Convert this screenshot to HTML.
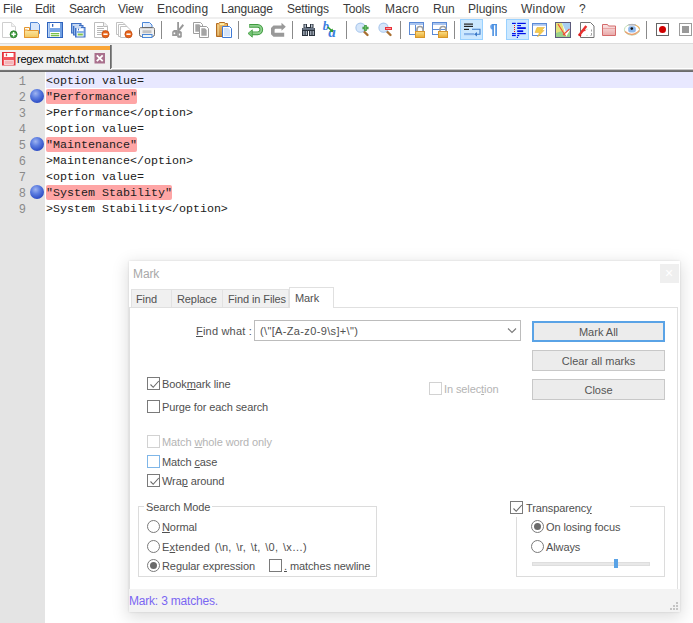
<!DOCTYPE html>
<html><head><meta charset="utf-8">
<style>
*{margin:0;padding:0;box-sizing:border-box}
html,body{width:693px;height:623px;overflow:hidden;background:#fff;position:relative;font-family:"Liberation Sans",sans-serif}
.a{position:absolute}
.t{position:absolute;white-space:nowrap;line-height:1}
#menu{left:0;top:0;width:693px;height:19px;background:#fff;border-bottom:2px solid #efefef}
.mi{position:absolute;top:3px;font-size:12px;color:#3a3a3a;white-space:nowrap;line-height:12px;letter-spacing:-0.2px}
#tool{left:0;top:19px;width:693px;height:25px;background:#fff;border-bottom:1px solid #dcdcdc}
.sep{position:absolute;top:21px;width:1px;height:18px;background:#8a8a8a}
#tabbar{left:0;top:44px;width:693px;height:26px;background:#f0f0f0}
#editor{left:0;top:72px;width:693px;height:551px;background:#fff}
#margin{left:0;top:72px;width:45px;height:551px;background:#e4e4e4}
.ln{position:absolute;left:0;width:26px;text-align:right;font-family:"Liberation Mono",monospace;font-size:12px;color:#8a8a8a;line-height:16px;height:16px;padding-top:2px}
.code{position:absolute;left:46px;font-family:"Liberation Mono",monospace;font-size:11.67px;color:#202020;line-height:16px;height:16px;white-space:pre;padding-top:1px}
.mk{position:absolute;left:46px;height:15px;background:#fea5a5;border-radius:2px}
.bm{position:absolute;left:30px;width:14px;height:14px;border-radius:50%;background:radial-gradient(circle at 40% 32%,#9fb4f0 0%,#5c7de0 35%,#2c4cc4 75%,#1c34a0 100%)}
/* dialog */
#dlg{left:129px;top:261px;width:551px;height:351px;background:#fff;box-shadow:0 4px 15px 2px rgba(0,0,0,0.13),0 0 2px rgba(0,0,0,0.12)}
.dt{position:absolute;z-index:2;white-space:nowrap;font-size:11px;line-height:12px;color:#505050;letter-spacing:-0.1px}
.cb{position:absolute;width:13px;height:13px;border:1px solid #7a7a7a;background:#fff}
.cb.dis{border-color:#d2d2d2}
.cb.hov{border-color:#7fb6e8}
.rb{position:absolute;width:13px;height:13px;border:1px solid #7a7a7a;border-radius:50%;background:#fff}
.btn{position:absolute;left:403px;width:133px;height:21px;background:#ececec;border:1px solid #c8c8c8}
.btn span{position:absolute;left:0;right:0;top:4px;text-align:center;font-size:11px;line-height:12px;color:#555;letter-spacing:0px}
</style></head><body>

<!-- menu bar -->
<div id="menu" class="a">
<span class="mi" style="left:3px;letter-spacing:0px">File</span>
<span class="mi" style="left:35px">Edit</span>
<span class="mi" style="left:69px;letter-spacing:-0.3px">Search</span>
<span class="mi" style="left:118px">View</span>
<span class="mi" style="left:157px;letter-spacing:0.15px">Encoding</span>
<span class="mi" style="left:221px">Language</span>
<span class="mi" style="left:287px">Settings</span>
<span class="mi" style="left:343px">Tools</span>
<span class="mi" style="left:385px;letter-spacing:0.15px">Macro</span>
<span class="mi" style="left:433px">Run</span>
<span class="mi" style="left:468px;letter-spacing:0px">Plugins</span>
<span class="mi" style="left:521px;letter-spacing:0.25px">Window</span>
<span class="mi" style="left:579px">?</span>
</div>

<!-- toolbar -->
<div id="tool" class="a"></div>



<!-- tab bar -->
<div id="tabbar" class="a"></div>
<div class="a" style="left:0;top:46px;width:110px;height:4px;background:#faa638"></div>
<div class="a" style="left:110px;top:45px;width:1px;height:24px;background:#6a6a6a"></div><div class="a" style="left:111px;top:45px;width:1px;height:23px;background:#8c8c8c"></div>
<div class="a" style="left:112px;top:68px;width:581px;height:1px;background:#fff"></div><div class="a" style="left:112px;top:69px;width:581px;height:1px;background:#c4c4c4"></div><div class="a" style="left:0px;top:69px;width:112px;height:1px;background:#e4e4e4"></div>
<div class="a" style="left:0;top:70px;width:693px;height:1px;background:#767676"></div><div class="a" style="left:0;top:71px;width:693px;height:1px;background:#6c6c6c"></div>
<span class="t" style="left:17px;top:54px;font-size:11px;color:#000;letter-spacing:-0.25px">regex match.txt</span>

<svg class="a" style="left:0;top:0" width="693" height="70" viewBox="0 0 693 70">
<defs>
<linearGradient id="gFold" x1="0" y1="0" x2="0" y2="1"><stop offset="0" stop-color="#fbe7a6"/><stop offset="1" stop-color="#f3c85e"/></linearGradient>
<linearGradient id="gClip" x1="0" y1="0" x2="0" y2="1"><stop offset="0" stop-color="#f0c070"/><stop offset="1" stop-color="#c88a3a"/></linearGradient>
<linearGradient id="gLock" x1="0" y1="0" x2="0" y2="1"><stop offset="0" stop-color="#fbe08a"/><stop offset="1" stop-color="#e8aa30"/></linearGradient>
<linearGradient id="gPrn" x1="0" y1="0" x2="0" y2="1"><stop offset="0" stop-color="#f4f4f4"/><stop offset="1" stop-color="#9a9a9a"/></linearGradient>
<linearGradient id="gPink" x1="0" y1="0" x2="0" y2="1"><stop offset="0" stop-color="#fbe6e6"/><stop offset="1" stop-color="#e8a8a8"/></linearGradient>
</defs>
<!-- separators -->
<g fill="#8a8a8a">
<rect x="161" y="21" width="1" height="18"/><rect x="238" y="21" width="1" height="18"/><rect x="292" y="21" width="1" height="18"/>
<rect x="346" y="21" width="1" height="18"/><rect x="400" y="21" width="1" height="18"/><rect x="454" y="21" width="1" height="18"/>
<rect x="646" y="21" width="1" height="18"/>
</g>
<!-- 1 new -->
<path d="M2.5 22.5 H11.5 L15.5 26.5 V37.5 H2.5 Z" fill="#fff" stroke="#cfcfcf"/>
<path d="M11.5 22.5 V26.5 H15.5" fill="#f2f2f2" stroke="#dcdcdc"/>
<circle cx="13.6" cy="34.3" r="3.5" fill="#3f9c3f" stroke="#2b7d2b" stroke-width="0.8"/>
<path d="M13.6 32.1 V36.5 M11.4 34.3 H15.8" stroke="#fff" stroke-width="1.5"/>
<!-- 2 open -->
<path d="M24.5 27.5 H29.5 V37.5 H24.5 Z" fill="#fffaf0" stroke="#e4962e"/>
<path d="M30.5 22.5 H37.5 L39.5 24.5 V33.5 H30.5 Z" fill="#d8e7fb" stroke="#4f86d6"/>
<path d="M24.5 30 H27 L28 30.5 H38.5 V37.5 H24.5 Z" fill="url(#gFold)" stroke="#e4962e"/>
<!-- 3 save -->
<rect x="47.5" y="22.5" width="15" height="15" fill="#6f9fe2" stroke="#2f63bd"/>
<rect x="48" y="23" width="1.5" height="14" fill="#b8d2f4"/>
<rect x="50" y="23" width="10" height="5" fill="#fff"/>
<rect x="52" y="24" width="1.3" height="2.8" fill="#2f63bd"/>
<rect x="50" y="28" width="10" height="4" fill="#7aa6e6"/>
<rect x="50" y="32" width="10" height="5" fill="#fff"/>
<rect x="50.8" y="33" width="8.4" height="1.3" fill="#78c048"/>
<rect x="50.8" y="35" width="8.4" height="1.3" fill="#78c048"/>
<!-- 4 save all -->
<g stroke="#3f6fc2" fill="#8fb4ea">
<rect x="71.5" y="23.5" width="9.5" height="9.5"/>
<rect x="73.5" y="25.5" width="9.5" height="9.5"/>
<rect x="75.5" y="27.5" width="9.5" height="9.5"/>
</g>
<rect x="73" y="24.5" width="6" height="1.2" fill="#fff"/>
<rect x="75" y="26.5" width="6" height="1.2" fill="#fff"/>
<rect x="77" y="28.3" width="6.5" height="2.7" fill="#fff"/>
<rect x="78" y="28.6" width="1" height="1.8" fill="#3f6fc2"/>
<rect x="77" y="33" width="6.5" height="3.4" fill="#f4fbe8"/>
<rect x="77.8" y="33.6" width="5" height="1.8" fill="#7cc048"/>
<!-- 5 close -->
<path d="M94.5 22.5 H104 L107.5 26 V37.5 H94.5 Z" fill="#fff" stroke="#bdbdbd"/>
<path d="M103.5 22.5 V26.5 H107.5" fill="#eee" stroke="#bdbdbd"/>
<path d="M97 26.5 H103 M97 28.5 H104 M97 30.5 H104 M97 32.5 H102 M97 34.5 H101" stroke="#9a9a9a" stroke-width="0.7"/>
<circle cx="105.5" cy="34.2" r="3.6" fill="#e8641a" stroke="#c04a10" stroke-width="0.8"/>
<path d="M103.4 34.2 H107.6" stroke="#fff" stroke-width="1.5"/>
<!-- 6 close all -->
<g fill="#fff" stroke="#c2c2c2">
<path d="M116.5 22.5 H123 L125.5 25 V34.5 H116.5 Z"/>
<path d="M118.5 24.5 H125 L127.5 27 V36.5 H118.5 Z"/>
<path d="M120.5 26.5 H127 L130.5 30 V37.5 H120.5 Z"/>
</g>
<circle cx="128.5" cy="34.2" r="3.6" fill="#e8641a" stroke="#c04a10" stroke-width="0.8"/>
<path d="M126.4 34.2 H130.6" stroke="#fff" stroke-width="1.5"/>
<!-- 7 print -->
<path d="M142.5 22.5 H149.5 L152 25 V29 H142.5 Z" fill="#dde9fb" stroke="#4a86d8"/>
<rect x="143.2" y="23.2" width="1.2" height="5.5" fill="#fff"/>
<rect x="139.5" y="27.5" width="15" height="9" rx="2" fill="#f2f2f2" stroke="#6a6a6a"/>
<rect x="140" y="28" width="14" height="1.3" fill="#d6d6d6"/>
<rect x="142.5" y="30.2" width="9" height="3" fill="#c2c2c2"/>
<rect x="142.5" y="34.5" width="9.5" height="3" fill="#eef6f6" stroke="#4a86d8"/>
<!-- 8 cut -->
<g fill="#989898" fill-rule="evenodd">
<rect x="177.2" y="22" width="1.8" height="10"/>
<path d="M182.6 24 L184 25.6 L179.6 31 L178.2 29.6 Z"/>
<path d="M174 30 H177 L177.5 31.5 V36 H172.2 V31.8 Z M173.6 32.6 H175.2 V34.2 H173.6 Z"/>
<path d="M177.2 31.5 L180 30.8 L181.8 32 V37 L180.8 37.8 H178 L177.2 37 Z M178.8 33.6 V35.6 H180.2 V33.6 Z"/>
</g>
<!-- 9 copy -->
<path d="M193.5 22.5 H200.5 L202.5 24.5 V33.5 H193.5 Z" fill="#fff" stroke="#9e9e9e"/>
<path d="M195.3 24.3 H199.2 L200.5 25.6 V31.7 H195.3 Z" fill="#a4a4a4"/>
<path d="M199.5 26.5 H206.5 L208.5 28.5 V37.5 H199.5 Z" fill="#fff" stroke="#9e9e9e"/>
<path d="M201.3 28.3 H205 L206.7 30 V35.8 H201.3 Z" fill="#a4a4a4"/>
<!-- 10 paste -->
<path d="M219.5 22.5 H224.5 L225.5 23.5 H227.5 V36.5 H216.5 V23.5 H218.5 Z" fill="url(#gClip)" stroke="#b46c22"/>
<rect x="217.6" y="25" width="1" height="10.5" fill="#f6dc9c"/>
<rect x="220" y="23.2" width="4" height="1.8" fill="#fff0a8"/>
<path d="M222.5 26.5 H229.5 L231.5 28.5 V37.5 H222.5 Z" fill="#fff" stroke="#3f7ad6"/>
<path d="M223.8 28 H228 L230 30 V36.2 H223.8 Z" fill="#d4e4fb"/>
<!-- 11 undo -->
<path d="M249.2 25.9 H257.6 A3.7 3.7 0 0 1 257.6 33.3 H252" fill="none" stroke="#3f9a3f" stroke-width="3.7"/>
<path d="M249.6 25.9 H257.6 A3.7 3.7 0 0 1 257.6 33.3 H252" fill="none" stroke="#8ed08e" stroke-width="1.9"/>
<path d="M248 33.4 L252.3 29.8 V37.2 Z" fill="#74c474" stroke="#3f9a3f" stroke-width="0.8" stroke-linejoin="round"/>
<!-- 12 redo -->
<path d="M273.5 25.5 H281.5 V22.8 L285.8 26.8 L281.5 30.8 V28.7 H275.4 L274.6 29.5 V32.7 H284.2 V36.8 H273.5 L271 34.3 V28 Z" fill="#999"/>
<!-- 13 find binoculars -->
<g fill="#2a323c">
<rect x="303.5" y="24" width="3.5" height="5"/><rect x="310" y="24" width="3.5" height="5"/>
<rect x="302" y="28" width="6" height="8"/><rect x="309" y="28" width="6" height="8"/>
<rect x="307" y="27" width="3" height="4"/>
</g>
<g fill="#b8c2d0">
<rect x="304.5" y="24.5" width="1.5" height="3"/><rect x="311" y="24.5" width="1.5" height="3"/>
<rect x="302.5" y="28.3" width="12" height="1.3" fill="#8a98ac"/>
<rect x="303.3" y="31" width="1.2" height="4"/><rect x="305.7" y="31" width="1.2" height="4"/>
<rect x="310.2" y="31" width="1.2" height="4"/><rect x="312.6" y="31" width="1.2" height="4"/>
</g>
<!-- 14 replace -->
<text x="322.8" y="30.3" font-family="Liberation Serif" font-style="italic" font-weight="bold" font-size="12.5" fill="#3b7de0">b</text>
<text x="328.2" y="37.2" font-family="Liberation Serif" font-style="italic" font-weight="bold" font-size="15" fill="#3b7de0">a</text>
<path d="M327.8 27 L331.5 30.5" stroke="#2e9a2e" stroke-width="1.6"/>
<path d="M333.3 32.3 L329.2 31.6 L332.6 28.4 Z" fill="#2e9a2e"/>
<!-- 15 zoom in -->
<path d="M363.5 31 L367.5 35" stroke="#a86e30" stroke-width="2.4" stroke-linecap="round"/>
<circle cx="360.5" cy="27.7" r="4.6" fill="#d5e6fa" stroke="#a9c7ec" stroke-width="1.1"/>
<path d="M365.5 25 V31 M362.5 28 H368.5" stroke="#2f8f2f" stroke-width="2.4"/>
<path d="M365.5 25.5 V30.5 M363 28 H368" stroke="#6cc06c" stroke-width="0.9"/>
<!-- 16 zoom out -->
<path d="M386.5 31 L390.5 35" stroke="#a86e30" stroke-width="2.4" stroke-linecap="round"/>
<circle cx="383.5" cy="27.7" r="4.6" fill="#d5e6fa" stroke="#a9c7ec" stroke-width="1.1"/>
<rect x="385" y="27" width="7" height="3" fill="#e8303a"/>
<rect x="386" y="28" width="5" height="1" fill="#ff9a9a"/>
<!-- 17 sync v -->
<rect x="409.5" y="22.5" width="14" height="12" fill="#fff" stroke="#5b8ad6"/>
<rect x="410" y="23" width="13" height="2" fill="#a9c4ef"/>
<path d="M415.5 25 V34" stroke="#5b8ad6"/>
<path d="M417 32 V29.5 A3 3 0 0 1 423 29.5 V32" fill="none" stroke="#a0a0a0" stroke-width="1.7"/>
<rect x="415.5" y="31.5" width="9" height="6" fill="url(#gLock)" stroke="#d8962a"/>
<!-- 18 sync h -->
<rect x="432.5" y="22.5" width="14" height="12" fill="#fff" stroke="#5b8ad6"/>
<rect x="433" y="23" width="13" height="2" fill="#a9c4ef"/>
<path d="M433 29.5 H446" stroke="#5b8ad6"/>
<path d="M440 32 V29.5 A3 3 0 0 1 446 29.5 V32" fill="none" stroke="#a0a0a0" stroke-width="1.7"/>
<rect x="438.5" y="31.5" width="9" height="6" fill="url(#gLock)" stroke="#d8962a"/>
<!-- 19 word wrap (checked) -->
<rect x="460.5" y="19.5" width="22" height="20" fill="#cce8ff" stroke="#99d1ff"/>
<rect x="464" y="23.5" width="9" height="1.2" fill="#222"/>
<rect x="464" y="25.8" width="9" height="1.2" fill="#222"/>
<rect x="464" y="28.8" width="5" height="1.2" fill="#222"/>
<path d="M472 29.3 H480 V34.3 H476" fill="none" stroke="#3a78c8" stroke-width="1.1"/>
<path d="M474 34.3 L477 32 V36.6 Z" fill="#3a78c8"/>
<rect x="464" y="33" width="10" height="2.2" fill="#8ab4e8"/>
<!-- 20 pilcrow -->
<path d="M493 24 A2.8 2.8 0 0 0 493 29.6 Z" fill="#6aa2ea"/>
<rect x="492" y="24" width="5" height="1.2" fill="#4a90e2"/>
<rect x="492.3" y="24" width="1.6" height="12" fill="#4a90e2"/>
<rect x="495.3" y="24" width="1.6" height="12" fill="#4a90e2"/>
<!-- 21 indent guide (checked) -->
<rect x="506.5" y="19.5" width="22" height="20" fill="#cce8ff" stroke="#99d1ff"/>
<g fill="#0010e8">
<rect x="512" y="22.8" width="3.8" height="1.2"/><rect x="517.2" y="22.8" width="8.6" height="1.2"/>
<rect x="517.2" y="25" width="3.8" height="1.2"/>
<rect x="517.2" y="27.2" width="8.6" height="1.8"/>
<rect x="517.2" y="30.3" width="6" height="1.8"/>
<rect x="512" y="33" width="3.8" height="1.2"/><rect x="517.2" y="33" width="8.6" height="1.2"/>
<rect x="512" y="34.9" width="3.8" height="1.2"/><rect x="517.2" y="34.9" width="2" height="1.2"/>
<rect x="516.8" y="36.8" width="1.2" height="1.2"/>
</g>
<g fill="#f01010"><rect x="514" y="25" width="1" height="1"/><rect x="514" y="27" width="1" height="1"/><rect x="514" y="29" width="1" height="1"/><rect x="514" y="31" width="1" height="1"/></g>
<!-- 22 UDL -->
<rect x="532.5" y="23.5" width="14" height="12" fill="#fff" stroke="#5b8ad6"/>
<rect x="533" y="24" width="13" height="1.8" fill="#a9c4ef"/>
<path d="M537 27.5 H544.5 L541.5 30.5 H544 L537.5 37 L539.5 32.5 H535 Z" fill="#f3cb4a" stroke="#e0a830" stroke-width="0.5"/>
<!-- 23 doc map -->
<rect x="555.5" y="22.5" width="15" height="15" fill="#fff" stroke="#5c5a7a"/>
<path d="M556 23 H562 L566 37 H556 Z" fill="#e3e37a"/>
<path d="M562 23 H570 V30 L566 32 Z" fill="#a8cff0"/>
<path d="M556 33 L562 31 L566 37 H556 Z" fill="#9ad28a"/>
<path d="M566 37 L570 30 V37 Z" fill="#9ad28a"/>
<path d="M558 24 L565.5 36 M563 35 L569.5 29" stroke="#ef4a3a" stroke-width="1.1"/>
<!-- 24 function list -->
<path d="M580.5 22.5 H590.5 L594 26 V37.5 H580.5 Z" fill="#fff" stroke="#737373"/>
<path d="M579.2 35.2 L586.3 26" stroke="#e8302f" stroke-width="2.4"/>
<path d="M581.5 30.8 L585.5 30.2" stroke="#e8302f" stroke-width="1.4"/>
<path d="M578.5 34.5 L581 36" stroke="#d81818" stroke-width="1.8"/>
<path d="M591.5 29.5 V31.5 M591.5 33 V35 L590.5 36" stroke="#8a8a8a" stroke-width="0.8" fill="none"/>
<circle cx="587" cy="29.2" r="0.5" fill="#8fd08f"/><circle cx="587" cy="35.2" r="0.5" fill="#8fd08f"/>
<!-- 25 folder -->
<path d="M602.5 24.5 H607.5 L608.5 26 H615.5 V35.5 H602.5 Z" fill="url(#gPink)" stroke="#d46a6a"/>
<path d="M603 28.5 H615" stroke="#e49a9a" stroke-width="0.8"/>
<!-- 26 eye -->
<ellipse cx="632" cy="29.7" rx="7.6" ry="5.4" fill="#fff" stroke="#b8d8a8" stroke-width="0.9"/>
<path d="M625 31.5 Q632 38 639.4 30.5" fill="none" stroke="#eba070" stroke-width="1.3"/>
<path d="M635 25 Q639 26.5 639.6 29.5" fill="none" stroke="#f0b060" stroke-width="1.1"/>
<path d="M628.5 24.8 H635.5" stroke="#b4b4bc" stroke-width="1.6"/>
<rect x="628.2" y="26.2" width="7.6" height="6.2" rx="2.2" fill="#8cb8ec"/>
<circle cx="631.8" cy="28.6" r="1.3" fill="#111"/>
<!-- 27 record -->
<rect x="656.5" y="23.5" width="12" height="12" fill="#fff" stroke="#666"/>
<circle cx="662.5" cy="29.5" r="3.5" fill="#d00000"/>
<!-- 28 stop -->
<rect x="679.5" y="23.5" width="12" height="12" fill="#fff" stroke="#9c9c9c"/>
<rect x="682" y="26" width="7" height="7" fill="#999"/>
<!-- tab: save icon red -->
<rect x="2.5" y="52.5" width="12.5" height="12.5" fill="#f2545c" stroke="#e2303a"/>
<rect x="4" y="53" width="9.5" height="4" fill="#fff"/>
<rect x="5.8" y="53.6" width="1.3" height="2.6" fill="#e84048"/>
<rect x="4.5" y="60.5" width="8.8" height="4" fill="#f4b4b8" stroke="#fbe4e6" stroke-width="0.8"/>
<!-- tab close -->
<rect x="94.5" y="53" width="10.5" height="10.5" fill="#a9708d"/>
<path d="M96.8 55.3 L102.7 61.2 M102.7 55.3 L96.8 61.2" stroke="#fff" stroke-width="1.8"/>
</svg>
<!-- editor -->
<div id="editor" class="a"></div>
<div id="margin" class="a"></div>
<div class="a" style="left:46px;top:72px;width:647px;height:16px;background:#e8e8ff"></div>
<div class="mk" style="top:89px;width:91px"></div>
<div class="mk" style="top:137px;width:91px"></div>
<div class="mk" style="top:185px;width:126px"></div>
<div class="bm" style="top:89px"></div>
<div class="bm" style="top:137px"></div>
<div class="bm" style="top:185px"></div>
<div class="ln" style="top:72px">1</div>
<div class="ln" style="top:88px">2</div>
<div class="ln" style="top:104px">3</div>
<div class="ln" style="top:120px">4</div>
<div class="ln" style="top:136px">5</div>
<div class="ln" style="top:152px">6</div>
<div class="ln" style="top:168px">7</div>
<div class="ln" style="top:184px">8</div>
<div class="ln" style="top:200px">9</div>
<div class="code" style="top:72px">&lt;option value=</div>
<div class="code" style="top:88px">"Performance"</div>
<div class="code" style="top:104px">&gt;Performance&lt;/option&gt;</div>
<div class="code" style="top:120px">&lt;option value=</div>
<div class="code" style="top:136px">"Maintenance"</div>
<div class="code" style="top:152px">&gt;Maintenance&lt;/option&gt;</div>
<div class="code" style="top:168px">&lt;option value=</div>
<div class="code" style="top:184px">"System Stability"</div>
<div class="code" style="top:200px">&gt;System Stability&lt;/option&gt;</div>

<!-- dialog -->
<div id="dlg" class="a">
  <span class="dt" style="left:4px;top:7px;color:#a8a8a8;font-size:12px;letter-spacing:-0.1px">Mark</span>
  <div class="a" style="left:531px;top:3px;width:19px;height:19px;background:#efefef"></div>
  <span class="a" style="left:536px;top:4px;font-size:14px;color:#fff;line-height:16px">×</span>
  <!-- tab strip -->
  <div class="a" style="left:2px;top:28px;width:41px;height:19px;background:#f0f0f0;border:1px solid #e2e2e2;border-bottom:none"></div>
  <div class="a" style="left:43px;top:28px;width:51px;height:19px;background:#f0f0f0;border:1px solid #e2e2e2;border-left:none;border-bottom:none"></div>
  <div class="a" style="left:94px;top:28px;width:66px;height:19px;background:#f0f0f0;border:1px solid #e2e2e2;border-left:none;border-bottom:none"></div>
  <!-- panel -->
  <div class="a" style="left:0px;top:46px;width:549px;height:283px;border:1px solid #e0e0e0;background:#fff"></div>
  <div class="a" style="left:160px;top:26px;width:45px;height:21px;background:#fff;border:1px solid #e0e0e0;border-bottom:none"></div>
  <span class="dt" style="left:7px;top:32px">Find</span>
  <span class="dt" style="left:48px;top:32px">Replace</span>
  <span class="dt" style="left:99px;top:32px">Find in Files</span>
  <span class="dt" style="left:166px;top:31px">Mark</span>
  <!-- find what -->
  <span class="dt" style="left:67px;top:64px;letter-spacing:0.2px"><u>F</u>ind what :</span>
  <div class="a" style="left:125px;top:59px;width:267px;height:21px;border:1px solid #bcbcbc;background:#fff"></div>
  <span class="dt" style="left:131px;top:64px;letter-spacing:0.35px">(\"[A-Za-z0-9\s]+\")</span>
  <svg class="a" style="left:378px;top:66px" width="10" height="7" viewBox="0 0 10 7"><path d="M1 1.5 L5 5.5 L9 1.5" fill="none" stroke="#7a7a7a" stroke-width="1.1"/></svg>
  <!-- buttons -->
  <div class="btn" style="top:60px;border:2px solid #5aa3e6"><span style="top:3px">Mark All</span></div>
  <div class="btn" style="top:89px"><span>Clear all marks</span></div>
  <div class="btn" style="top:118px"><span>Close</span></div>
  <!-- checkboxes -->
  <div class="cb" style="left:18px;top:116px"><svg class="a" style="left:1px;top:1px" width="11" height="11" viewBox="0 0 11 11"><path d="M1.5 5.5 L4.2 8.3 L9.8 2" fill="none" stroke="#6a6a6a" stroke-width="1.1"/></svg></div>
  <span class="dt" style="left:33px;top:117px">Book<u>m</u>ark line</span>
  <div class="cb" style="left:18px;top:139px"></div>
  <span class="dt" style="left:33px;top:140px">Purge for each search</span>
  <div class="cb dis" style="left:300px;top:121px"></div>
  <span class="dt" style="left:315px;top:122px;color:#b4b4b4">In selec<u>t</u>ion</span>
  <div class="cb dis" style="left:18px;top:174px"></div>
  <span class="dt" style="left:33px;top:175px;color:#b4b4b4">Match <u>w</u>hole word only</span>
  <div class="cb hov" style="left:18px;top:194px"></div>
  <span class="dt" style="left:33px;top:195px">Match <u>c</u>ase</span>
  <div class="cb" style="left:18px;top:213px"><svg class="a" style="left:1px;top:1px" width="11" height="11" viewBox="0 0 11 11"><path d="M1.5 5.5 L4.2 8.3 L9.8 2" fill="none" stroke="#6a6a6a" stroke-width="1.1"/></svg></div>
  <span class="dt" style="left:33px;top:214px">Wra<u>p</u> around</span>
  <!-- search mode group -->
  <div class="a" style="left:9px;top:245px;width:239px;height:71px;border:1px solid #dcdcdc"></div>
  <span class="dt" style="left:15px;top:240px;background:#fff;padding:0 2px 0 2px">Search Mode</span>
  <div class="rb" style="left:18px;top:259px"></div>
  <span class="dt" style="left:33px;top:260px"><u>N</u>ormal</span>
  <div class="rb" style="left:18px;top:279px"></div>
  <span class="dt" style="left:33px;top:280px;word-spacing:1.5px;letter-spacing:0.2px">E<u>x</u>tended (\n, \r, \t, \0, \x…)</span>
  <div class="rb" style="left:18px;top:298px"><div class="a" style="left:2px;top:2px;width:7px;height:7px;border-radius:50%;background:#6a6a6a"></div></div>
  <span class="dt" style="left:33px;top:299px">Re<u>g</u>ular expression</span>
  <div class="cb" style="left:140px;top:298px"></div>
  <span class="dt" style="left:155px;top:299px"><u>.</u> matches newline</span>
  <!-- transparency group -->
  <div class="a" style="left:387px;top:245px;width:149px;height:71px;border:1px solid #dcdcdc"></div>
  <div class="a" style="left:380px;top:238px;width:121px;height:18px;background:#fff"></div>
  <div class="cb" style="left:381px;top:240px"><svg class="a" style="left:1px;top:1px" width="11" height="11" viewBox="0 0 11 11"><path d="M1.5 5.5 L4.2 8.3 L9.8 2" fill="none" stroke="#6a6a6a" stroke-width="1.1"/></svg></div>
  <span class="dt" style="left:397px;top:241px">Transparenc<u>y</u></span>
  <div class="rb" style="left:402px;top:259px"><div class="a" style="left:2px;top:2px;width:7px;height:7px;border-radius:50%;background:#6a6a6a"></div></div>
  <span class="dt" style="left:417px;top:260px">On losing focus</span>
  <div class="rb" style="left:402px;top:279px"></div>
  <span class="dt" style="left:417px;top:280px">Always</span>
  <div class="a" style="left:403px;top:301px;width:118px;height:4px;background:#e8e8e8;border:1px solid #dedede"></div>
  <div class="a" style="left:485px;top:298px;width:4px;height:9px;background:#5aa3e6"></div>
  <!-- status -->
  <div class="a" style="left:0;top:328px;width:551px;height:23px;background:#f3f3f3"></div>
  <span class="dt" style="left:0px;top:334px;color:#7a66f2;font-size:12px;letter-spacing:-0.2px">Mark: 3 matches.</span>
  <div class="a" style="left:548px;top:328px;width:1px;height:0px"></div>
  <svg class="a" style="left:540px;top:340px" width="10" height="10" viewBox="0 0 10 10"><g fill="#c4c4c4"><rect x="7" y="1" width="2" height="2"/><rect x="4" y="4" width="2" height="2"/><rect x="7" y="4" width="2" height="2"/><rect x="1" y="7" width="2" height="2"/><rect x="4" y="7" width="2" height="2"/><rect x="7" y="7" width="2" height="2"/></g></svg>
</div>

</body></html>
